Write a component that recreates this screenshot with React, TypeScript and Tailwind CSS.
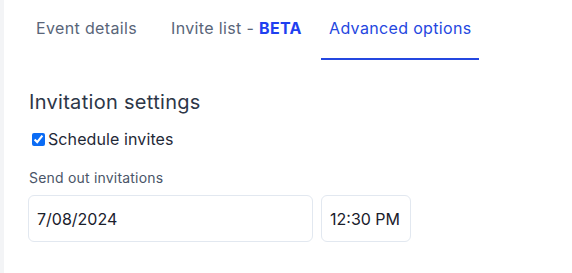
import React from "react";

export default function App() {
  return (
    <div
      className="flex h-[273px] w-[572px] bg-white"
      style={{ fontFamily: "Inter, 'Noto Sans', sans-serif" }}
    >
      <div className="w-[4px] shrink-0 bg-[#f3f4f6]" />
      <div className="flex flex-1 flex-col pl-[24px]">
        <div className="flex h-[60px] items-stretch whitespace-nowrap text-[16px] tracking-[0.35px]">
          <div className="flex w-[135px] shrink-0 items-center px-[8px] pb-[5px] text-[#596579]">Event details</div>
          <div className="flex w-[158px] shrink-0 items-center px-[8px] pb-[5px] text-[#596579]">
            Invite list -&nbsp;<span className="font-bold text-[#1f3ff0]">BETA</span>
          </div>
          <div className="flex w-[158px] shrink-0 items-center border-b-2 border-[#2447e0] pl-[8px] pb-[3px] text-[#2447e0]">
            Advanced options
          </div>
        </div>
        <div className="mt-[29px] pl-[1px] text-[20px] leading-[26px] tracking-[0.3px] text-[#2d3748]">
          Invitation settings
        </div>
        <label className="mt-[12px] flex items-center gap-[3px] pl-[4px] text-[16px] tracking-[0.1px] text-[#1f2937]">
          <input type="checkbox" defaultChecked className="h-[13px] w-[13px] accent-[#0b6cf5]" />
          <span>Schedule invites</span>
        </label>
        <div className="mt-[16px] pl-[1px] text-[14px] tracking-[0.2px] text-[#4a5568]">Send out invitations</div>
        <div className="mt-[7px] flex gap-[8px]">
          <div className="flex h-[47px] w-[285px] items-center rounded-[6px] border border-[#e2e8f0] pl-[8px] text-[16px] text-[#1a202c]">
            7/08/2024
          </div>
          <div className="flex h-[47px] w-[90px] items-center rounded-[6px] border border-[#e2e8f0] pl-[8px] text-[16px] text-[#1a202c]">
            12:30 PM
          </div>
        </div>
      </div>
    </div>
  );
}
